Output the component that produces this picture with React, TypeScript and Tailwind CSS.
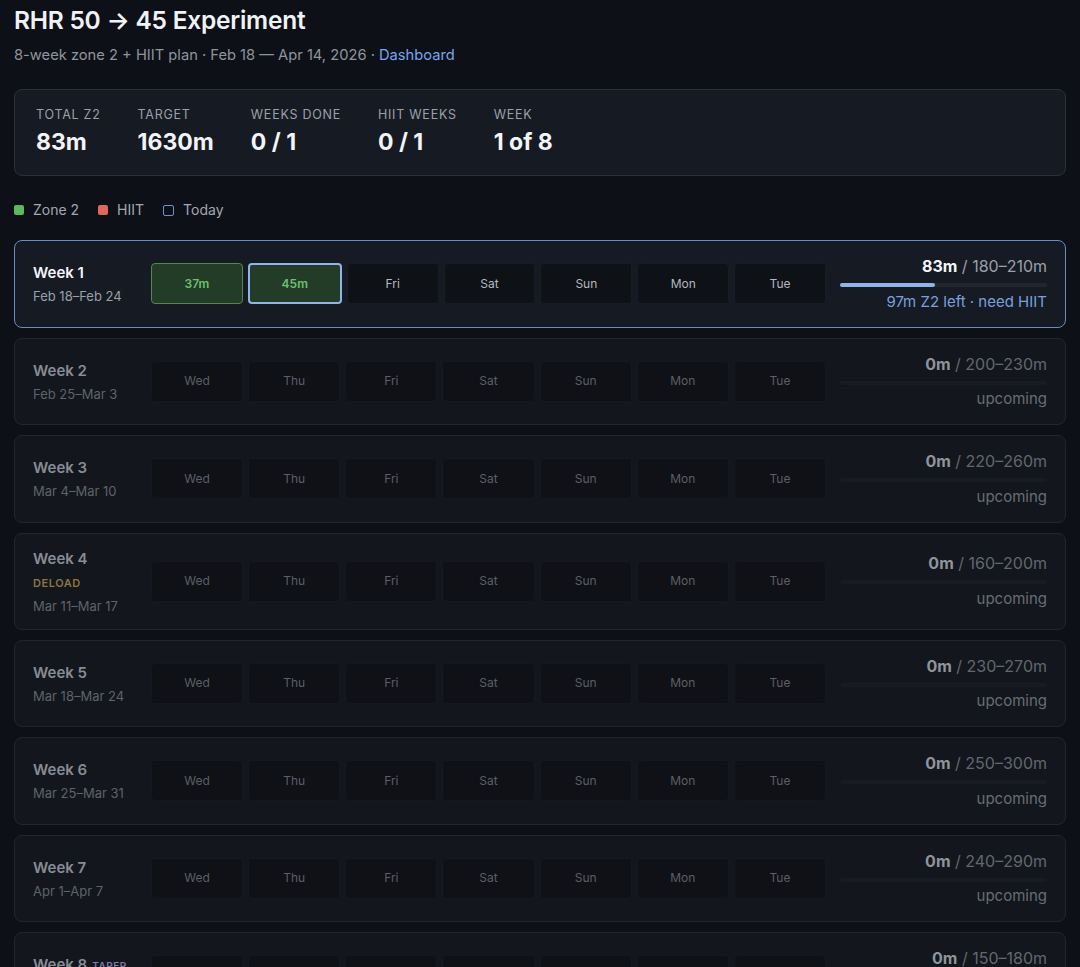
const days = ['Wed', 'Thu', 'Fri', 'Sat', 'Sun', 'Mon', 'Tue'];

type Week = {
  n: number;
  dates: string;
  target: string;
  tag?: 'DELOAD' | 'TAPER';
};

const weeks: Week[] = [
  { n: 2, dates: 'Feb 25–Mar 3', target: '200–230m' },
  { n: 3, dates: 'Mar 4–Mar 10', target: '220–260m' },
  { n: 4, dates: 'Mar 11–Mar 17', target: '160–200m', tag: 'DELOAD' },
  { n: 5, dates: 'Mar 18–Mar 24', target: '230–270m' },
  { n: 6, dates: 'Mar 25–Mar 31', target: '250–300m' },
  { n: 7, dates: 'Apr 1–Apr 7', target: '240–290m' },
  { n: 8, dates: 'Apr 8–Apr 14', target: '150–180m', tag: 'TAPER' },
];

const stats = [
  { label: 'Total Z2', value: '83m' },
  { label: 'Target', value: '1630m' },
  { label: 'Weeks done', value: '0 / 1' },
  { label: 'HIIT weeks', value: '0 / 1' },
  { label: 'Week', value: '1 of 8' },
];

const CurrentWeek = () => (
  <div className="flex items-center gap-[14px] rounded-lg border border-[#6b8cc0] bg-[#161a23] px-[18px] py-[15px]">
    <div className="w-[104px]">
      <div className="text-[15px] font-semibold leading-5 text-[#f2f4f7]">Week 1</div>
      <div className="mt-[5px] text-[13px] leading-4 text-[#9aa0a9]">Feb 18–Feb 24</div>
    </div>
    <div className="flex flex-1 gap-[5px]">
      <div className="flex h-[41px] flex-1 items-center justify-center rounded-[4px] border border-[#4d8a4d] bg-[#233c27] text-[12px] font-semibold text-[#6cc070]">
        37m
      </div>
      <div className="flex h-[41px] flex-1 items-center justify-center rounded-[4px] border-2 border-[#8fb4ea] bg-[#233c27] text-[12px] font-semibold text-[#6cc070]">
        45m
      </div>
      {days.slice(2).map((d) => (
        <div
          key={d}
          className="flex h-[41px] flex-1 items-center justify-center rounded-[4px] border border-[#181c24] bg-[#0e1116] text-[12px] text-[#b4b8bf]"
        >
          {d}
        </div>
      ))}
    </div>
    <div className="w-[207px] text-right">
      <div className="text-[16px] leading-5 text-[#9aa0a9]">
        <span className="font-bold text-[#f4f5f7]">83m</span> / 180–210m
      </div>
      <div className="mt-[7px] mb-[4.5px] h-[4px] rounded-full bg-[#22272f]">
        <div className="h-full rounded-full bg-[#8fb4ea]" style={{ width: `${(83 / 180) * 100}%` }} />
      </div>
      <div className="text-[15px] leading-5 text-[#76a1de]">97m Z2 left · need HIIT</div>
    </div>
  </div>
);

const FutureWeek = ({ w }: { w: Week }) => (
  <div className="flex items-center gap-[14px] rounded-lg border border-[#22262e] bg-[#13161d] px-[18px] py-[15px]">
    <div className="w-[104px]">
      <div className="text-[15px] font-semibold leading-5 text-[#878c94]">
        Week {w.n}
        {w.tag === 'TAPER' && (
          <span className="ml-[5px] text-[10px] font-semibold tracking-wider text-[#7f79a6]">TAPER</span>
        )}
      </div>
      {w.tag === 'DELOAD' && (
        <div className="mt-[6px] text-[11px] font-semibold leading-4 tracking-wider text-[#8c7440]">DELOAD</div>
      )}
      <div className={`${w.tag === 'DELOAD' ? 'mt-[7px]' : 'mt-[5px]'} text-[13px] leading-4 text-[#5e636b]`}>
        {w.dates}
      </div>
    </div>
    <div className="flex flex-1 gap-[5px]">
      {days.map((d) => (
        <div
          key={d}
          className="flex h-[41px] flex-1 items-center justify-center rounded-[4px] border border-[#151820] bg-[#0f1116] text-[12px] text-[#5b5f66]"
        >
          {d}
        </div>
      ))}
    </div>
    <div className="w-[207px] text-right">
      <div className="text-[16px] leading-5 text-[#62676f]">
        <span className="font-bold text-[#8f949b]">0m</span> / {w.target}
      </div>
      <div className="mt-[7px] mb-[4.5px] h-[4px] rounded-full bg-[#181b22]" />
      <div className="text-[15px] leading-5 text-[#686d74]">upcoming</div>
    </div>
  </div>
);

export default function App() {
  return (
    <div
      className="min-h-screen bg-[#0d1016] px-[14px] pb-10"
      style={{ fontFamily: 'Inter, "Noto Sans", sans-serif' }}
    >
      {/* Header */}
      <h1 className="pt-[4px] text-[24.5px] font-semibold leading-8 tracking-[-0.01em] text-[#f0f2f5]">
        RHR 50 → 45 Experiment
      </h1>
      <p className="mt-[9px] text-[14.7px] leading-5 text-[#8f959e]">
        8-week zone 2 + HIIT plan · Feb 18 — Apr 14, 2026 ·{' '}
        <a className="text-[#76a5ee]">Dashboard</a>
      </p>

      {/* Stats */}
      <div className="mt-[24px] flex gap-[37px] rounded-lg border border-[#2c3139] bg-[#161a22] px-[21px] pt-[17px] pb-[19px]">
        {stats.map((s) => (
          <div key={s.label}>
            <div className="text-[12.5px] uppercase leading-4 tracking-[0.06em] text-[#9aa0a9]">{s.label}</div>
            <div className="mt-[5px] text-[23px] font-bold leading-7 text-[#f2f4f7]">{s.value}</div>
          </div>
        ))}
      </div>

      {/* Legend */}
      <div className="mt-[24px] flex items-center gap-[19px] text-[14px] leading-5 text-[#a2a8b0]">
        <div className="flex items-center gap-[9px]">
          <span className="h-[10px] w-[10px] rounded-[2px] bg-[#5cb85c]" />
          Zone 2
        </div>
        <div className="flex items-center gap-[9px]">
          <span className="h-[10px] w-[10px] rounded-[2px] bg-[#e0685a]" />
          HIIT
        </div>
        <div className="flex items-center gap-[9px]">
          <span className="h-[11px] w-[11px] rounded-[2px] border border-[#6f8fcf]" />
          Today
        </div>
      </div>

      {/* Weeks */}
      <div className="mt-[20px] flex flex-col gap-[10px]">
        <CurrentWeek />
        {weeks.map((w) => (
          <FutureWeek key={w.n} w={w} />
        ))}
      </div>
    </div>
  );
}
